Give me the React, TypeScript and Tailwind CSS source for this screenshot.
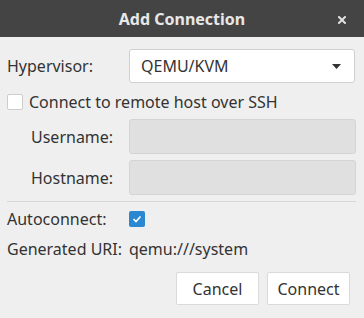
import React from 'react';

const font = { fontFamily: '"Noto Sans", "Open Sans", sans-serif' };

const Field: React.FC<{ label: string }> = ({ label }) => (
  <div className="flex items-center h-[35px]">
    <div className="w-[122px] pl-[24px] text-[16px] text-[#333333]">{label}</div>
    <div className="flex-1 h-full bg-[#e0e0e0] border border-[#d4d4d4] rounded-[3px]" />
  </div>
);

export default function App() {
  return (
    <div className="w-[364px] h-[318px] bg-[#efefef] overflow-hidden" style={font}>
      <div className="relative h-[37px] bg-[#444444] flex items-center justify-center">
        <span className="text-[16px] font-bold text-[#e8e8e8]">Add Connection</span>
        <svg className="absolute right-[18px] top-[16px]" width="8" height="8" viewBox="0 0 8 8">
          <path d="M1 1 L7 7 M7 1 L1 7" stroke="#e0e0e0" strokeWidth="2" strokeLinecap="square" />
        </svg>
      </div>

      <div className="pl-[7px] pr-[8px]">
        <div className="mt-[12px] flex items-center h-[34px]">
          <div className="w-[122px] text-[16px] text-[#333333]">Hypervisor:</div>
          <div className="flex-1 mr-[1px] h-full bg-white border border-[#d0d0d0] rounded-[3px] flex items-center justify-between pl-[11px] pr-[13px]">
            <span className="text-[16px] text-[#333333]">QEMU/KVM</span>
            <svg width="9" height="5" viewBox="0 0 9 5">
              <path d="M0 0 H9 L4.5 5 Z" fill="#333333" />
            </svg>
          </div>
        </div>

        <div className="mt-[11px] flex items-center h-[16px]">
          <div className="w-[16px] h-[16px] bg-white border border-[#cdcdcd] rounded-[2px]" />
          <span className="ml-[6px] text-[16px] text-[#333333]">Connect to remote host over SSH</span>
        </div>

        <div className="mt-[9px] flex flex-col gap-[6px]">
          <Field label="Username:" />
          <Field label="Hostname:" />
        </div>

        <div className="mt-[6px] h-px bg-[#d8d8d8]" />

        <div className="mt-[9px] flex items-center h-[16px]">
          <div className="w-[122px] text-[16px] text-[#333333]">Autoconnect:</div>
          <div className="w-[16px] h-[16px] bg-[#2a87d0] rounded-[2px] flex items-center justify-center">
            <svg width="10" height="8" viewBox="0 0 10 8">
              <path d="M1.5 4 L4 6.5 L8.5 1.5" stroke="white" strokeWidth="1.6" fill="none" />
            </svg>
          </div>
        </div>

        <div className="mt-[12px] flex items-center h-[20px] text-[16px] text-[#333333]">
          <div className="w-[122px]">Generated URI:</div>
          <div>qemu:///system</div>
        </div>

        <div className="mt-[13px] flex justify-end gap-[8px] pr-[6px]">
          <button className="w-[83px] h-[33px] bg-white border border-[#dadada] rounded-[2px] text-[16px] text-[#333333]">Cancel</button>
          <button className="w-[83px] h-[33px] bg-white border border-[#dadada] rounded-[2px] text-[16px] text-[#333333]">Connect</button>
        </div>
      </div>
    </div>
  );
}
